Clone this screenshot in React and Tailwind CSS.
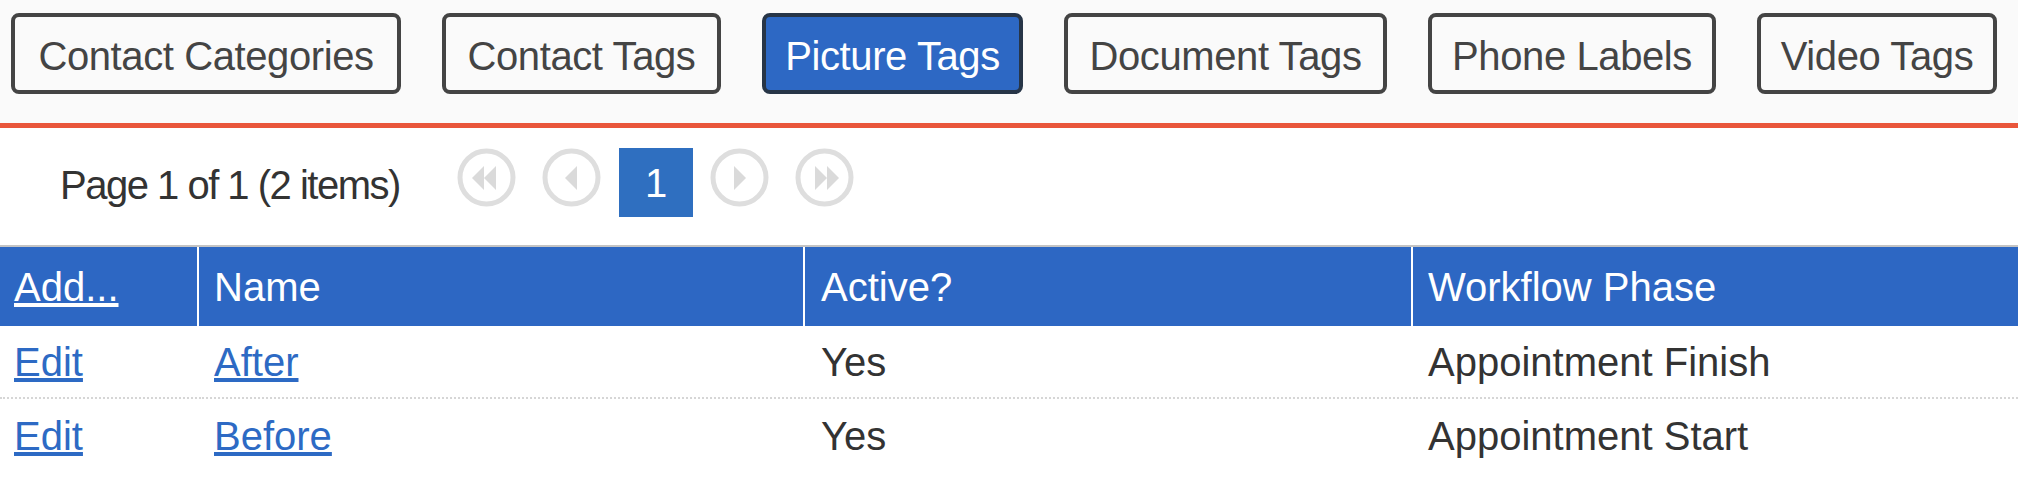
import React from 'react';

const tabs = [
    { label: 'Contact Categories', width: 'w-[390px]' },
    { label: 'Contact Tags', width: 'w-[279px]' },
    { label: 'Picture Tags', width: 'w-[261px]', active: true },
    { label: 'Document Tags', width: 'w-[323px]' },
    { label: 'Phone Labels', width: 'w-[288px]' },
    { label: 'Video Tags', width: 'w-[240px]' },
];

const rows = [
    { name: 'After', active: 'Yes', phase: 'Appointment Finish' },
    { name: 'Before', active: 'Yes', phase: 'Appointment Start' },
];

// pager arrow drawings, disabled look
const arrows = {
    first: ['15,30 27,18 27,42', '27,30 39,18 39,42'],
    prev: ['23,30 35,18 35,42'],
    next: ['36,30 24,18 24,42'],
    last: ['44,30 32,18 32,42', '32,30 20,18 20,42'],
};

const PagerCircle = ({ kind, className = '' }) => (
    <svg width="59" height="59" viewBox="0 0 59 59" className={`blur-[0.6px] shrink-0 ${className}`}>
        <circle cx="29.5" cy="29.5" r="26.5" fill="white" stroke="#dedede" strokeWidth="5" />
        {arrows[kind].map((p) => (
            <polygon key={p} points={p} fill="#dadada" />
        ))}
    </svg>
);

const App = () => {
    return (
        <div className="w-[2018px] min-h-[480px] bg-white font-['Liberation_Sans',Arial,sans-serif] text-[40px] leading-[46px] text-[#333]">
            {/* Tabs */}
            <div className="flex gap-[41px] bg-[#fafafa] pl-[11px] pt-[13px] pb-[29px] border-b-[5px] border-[#e9563b]">
                {tabs.map((t) => (
                    <button
                        key={t.label}
                        className={`${t.width} h-[81px] shrink-0 flex items-center justify-center pt-[4px] whitespace-nowrap tracking-[-0.4px] rounded-lg border-4 ${
                            t.active
                                ? 'bg-[#2d68c4] border-[#273547] text-white'
                                : 'bg-[#fafafa] border-[#444] text-[#444]'
                        }`}
                    >
                        {t.label}
                    </button>
                ))}
            </div>

            {/* Pager */}
            <div className="flex items-center pl-[60px] pt-[20px] pb-[28px] border-b-2 border-[#c4c4c4]">
                <span className="w-[397px] shrink-0 pt-[4px] whitespace-nowrap tracking-[-1.5px] text-[#333]">Page 1 of 1 (2 items)</span>
                <div className="flex items-start">
                    <PagerCircle kind="first" />
                    <PagerCircle kind="prev" className="ml-[26px]" />
                    <div className="ml-[18px] w-[74px] h-[69px] bg-[#2f6fc0] text-white flex items-center justify-center">
                        1
                    </div>
                    <PagerCircle kind="next" className="ml-[17px]" />
                    <PagerCircle kind="last" className="ml-[26px]" />
                </div>
            </div>

            {/* Table */}
            <div className="grid grid-cols-[197px_604px_606px_1fr] gap-x-[2px]">
                <div className="h-[79px] bg-[#2d67c3] text-white pl-[14px] flex items-center">
                    <a href="#" className="underline">Add...</a>
                </div>
                <div className="h-[79px] bg-[#2d67c3] text-white pl-[15px] flex items-center">Name</div>
                <div className="h-[79px] bg-[#2d67c3] text-white pl-[16px] flex items-center">Active?</div>
                <div className="h-[79px] bg-[#2d67c3] text-white pl-[15px] flex items-center">Workflow Phase</div>

                {rows.map((r, i) => {
                    const line = i < rows.length - 1 ? 'border-b-2 border-dotted border-[#d6d6d6]' : '';
                    return (
                        <React.Fragment key={r.name}>
                            <div className={`h-[73px] pl-[14px] flex items-center ${line}`}>
                                <a href="#" className="text-[#2d6ac4] underline">Edit</a>
                            </div>
                            <div className={`h-[73px] pl-[15px] flex items-center ${line}`}>
                                <a href="#" className="text-[#2d6ac4] underline">{r.name}</a>
                            </div>
                            <div className={`h-[73px] pl-[16px] flex items-center ${line}`}>{r.active}</div>
                            <div className={`h-[73px] pl-[15px] flex items-center ${line}`}>{r.phase}</div>
                        </React.Fragment>
                    );
                })}
            </div>
        </div>
    );
};

export default App;
